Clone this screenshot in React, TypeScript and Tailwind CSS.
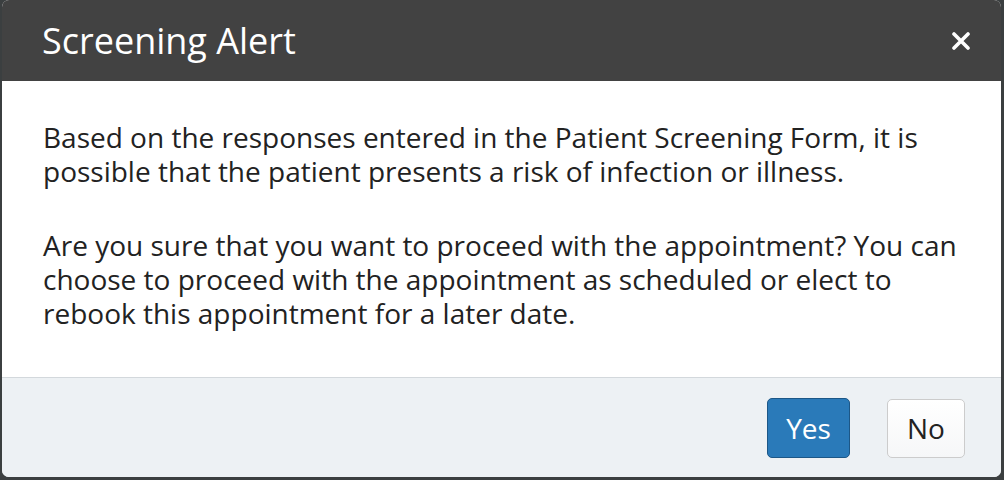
import React from 'react';

const font = { fontFamily: '"Open Sans", "Noto Sans", sans-serif' };

function CloseIcon() {
  return (
    <svg width="20" height="18" viewBox="0 0 20 18" aria-hidden="true">
      <path d="M3 2 L17 16 M17 2 L3 16" stroke="#ffffff" strokeWidth="3.6" strokeLinecap="round" />
    </svg>
  );
}

export default function App() {
  return (
    <div className="w-[1004px] h-[480px] bg-[#3b3f40] pl-[2px] pr-[3px] pb-[3px] overflow-hidden" style={font}>
      <div className="h-full flex flex-col rounded-[7px] overflow-hidden bg-white">
        {/* header */}
        <div className="h-[81px] shrink-0 bg-[#424242] flex items-center justify-between pl-[40px] pr-[30px]">
          <h1 className="text-[36px] leading-none text-white font-normal">Screening Alert</h1>
          <button className="w-[20px] h-[18px] flex items-center justify-center">
            <CloseIcon />
          </button>
        </div>

        {/* body */}
        <div className="flex-1 pl-[41px] pr-[30px] pt-[39px] text-[28px] leading-[34px] text-[#222222]">
          <p className="mb-[40px]">
            Based on the responses entered in the Patient Screening Form, it is possible that the patient presents a
            risk of infection or illness.
          </p>
          <p>
            Are you sure that you want to proceed with the appointment? You can choose to proceed with the appointment
            as scheduled or elect to rebook this appointment for a later date.
          </p>
        </div>

        {/* footer */}
        <div className="h-[100px] shrink-0 bg-[#edf1f4] border-t border-[#d3d8dc] flex items-center justify-end gap-[37px] pr-[36px] pt-[1px]">
          <button className="w-[83px] h-[60px] rounded-[5px] bg-[#2a7ab9] border border-[#1c5787] text-white text-[28px] leading-none">
            Yes
          </button>
          <button className="w-[78px] h-[59px] rounded-[5px] bg-gradient-to-b from-white to-[#f6f7f8] border border-[#cccccc] text-[#222222] text-[28px] leading-none">
            No
          </button>
        </div>
      </div>
    </div>
  );
}
